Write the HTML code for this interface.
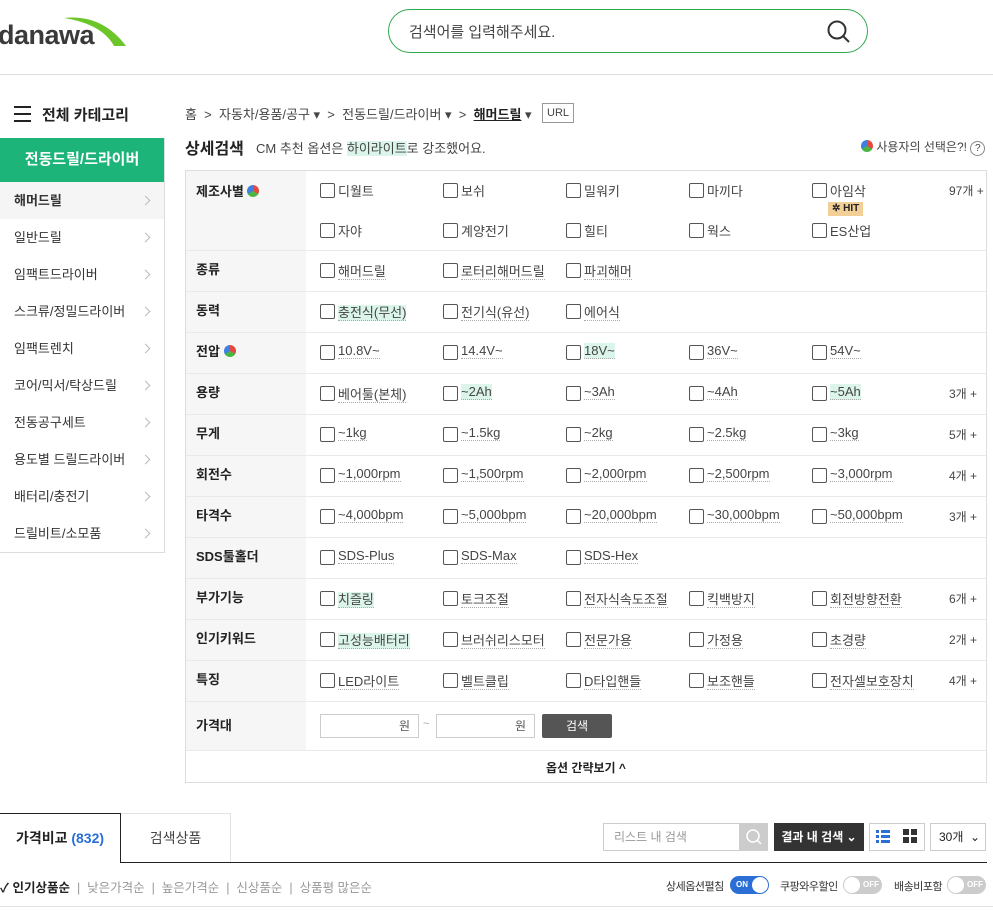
<!DOCTYPE html>
<html><head><meta charset="utf-8"><style>
*{box-sizing:border-box;margin:0;padding:0}
body{width:993px;height:911px;overflow:hidden;background:#fff;font-family:"Liberation Sans","Noto Sans CJK KR",sans-serif;color:#222;font-size:13px;position:relative}
.a{position:absolute;white-space:nowrap}
.hdr{position:absolute;left:0;top:74px;width:993px;height:1px;background:#ddd}
.search{position:absolute;left:388px;top:9px;width:480px;height:44px;border:1px solid #2fa84f;border-radius:22px}
.side{position:absolute;left:0;top:138px;width:165px;height:415px;border-right:1px solid #ddd;border-bottom:1px solid #ddd}
.side .g{height:44px;background:#1db47a;color:#fff;font-weight:bold;font-size:15px;text-align:center;line-height:44px}
.side .it{height:37px;line-height:37px;padding-left:14px;font-size:13px;color:#333;position:relative}
.side .it:after{content:"";position:absolute;right:15px;top:15px;width:6px;height:6px;border-top:1px solid #bbb;border-right:1px solid #bbb;transform:rotate(45deg)}
.tbl{position:absolute;left:185px;top:170px;width:802px;height:613px;border:1px solid #ddd}
.lab{position:absolute;left:0;width:120px;background:#f6f6f6;font-weight:bold;font-size:13px;padding-left:10px}
.rl{position:absolute;left:0;width:800px;height:1px;background:#eaeaea}
.o{position:absolute;font-size:13px;color:#444;padding-left:18px}
.o:before{content:"";position:absolute;left:0;top:2px;width:13px;height:13px;border:1px solid #555;border-radius:2px;background:#fff}
.o span{border-bottom:1px dotted #aaa}
.hl span{background:#dcf5ea}
.cnt{position:absolute;left:763px;font-size:12px;color:#444}
.pie{display:inline-block;width:12px;height:12px;border-radius:50%;background:conic-gradient(#e5483f 0 33%,#4bb543 0 66%,#3f7fe0 0);vertical-align:-1px}
</style></head><body>
<div class="a" style="left:-2px;top:20px;font-size:27px;font-weight:bold;color:#3a3a3a;letter-spacing:-0.5px">danawa</div>
<svg class="a" style="left:62px;top:14px" width="66" height="32"><path d="M2 4 Q40 0 64 32 L52 32 Q40 10 2 4Z" fill="#6cc62a"/></svg>
<div class="search"><span class="a" style="left:20px;top:11px;font-size:15px;color:#444">검색어를 입력해주세요.</span>
<svg class="a" style="left:437px;top:9px" width="26" height="26"><circle cx="11" cy="11" r="8.5" fill="none" stroke="#333" stroke-width="2"/><path d="M17 17 L23 23" stroke="#333" stroke-width="2"/></svg></div>
<div class="hdr"></div>
<svg class="a" style="left:14px;top:106px" width="18" height="16"><path d="M0 1H17M0 8H17M0 15H17" stroke="#222" stroke-width="2"/></svg>
<div class="a" style="left:42px;top:104px;font-size:15px;font-weight:bold">전체 카테고리</div>
<div class="side"><div class="g">전동드릴/드라이버</div>
<div class="it" style="background:#f5f5f5;font-weight:bold">해머드릴</div><div class="it">일반드릴</div><div class="it">임팩트드라이버</div><div class="it">스크류/정밀드라이버</div><div class="it">임팩트렌치</div><div class="it">코어/믹서/탁상드릴</div><div class="it">전동공구세트</div><div class="it">용도별 드릴드라이버</div><div class="it">배터리/충전기</div><div class="it">드릴비트/소모품</div></div>
<div class="a" style="left:185px;top:104px;font-size:13px;color:#444">홈 &nbsp;&gt;&nbsp; 자동차/용품/공구 ▾ &nbsp;&gt;&nbsp; 전동드릴/드라이버 ▾ &nbsp;&gt;&nbsp; <b style="color:#222;text-decoration:underline">해머드릴</b> ▾</div>
<div class="a" style="left:542px;top:103px;border:1px solid #999;font-size:11px;padding:3px 4px;color:#444">URL</div>
<div class="a" style="left:185px;top:135px;font-size:16px;font-weight:bold">상세검색</div>
<div class="a" style="left:256px;top:138px;font-size:13px;color:#444">CM 추천 옵션은 <span style="background:#dcf5ea">하이라이트</span>로 강조했어요.</div>
<div class="a" style="left:861px;top:138px;font-size:12px;color:#444"><span class="pie"></span> 사용자의 선택은?! <span style="display:inline-block;width:15px;height:15px;border:1px solid #888;border-radius:50%;text-align:center;font-size:10px;line-height:13px">?</span></div>
<div class="tbl">
<div class="lab" style="top:0;height:79px;padding-top:10px">제조사별 <span class="pie"></span></div>
<div class="rl" style="top:79px"></div>
<div class="o" style="left:134px;top:10px"><span style="border:0">디월트</span></div><div class="o" style="left:257px;top:10px">보쉬</div><div class="o" style="left:380px;top:10px">밀워키</div><div class="o" style="left:503px;top:10px">마끼다</div><div class="o" style="left:626px;top:10px">아임삭</div><div class="cnt" style="top:11px">97개 +</div>
<div class="a" style="left:642px;top:31px;background:#f1cf97;font-size:10px;font-weight:bold;padding:0 4px;line-height:14px">✲ HIT</div>
<div class="o" style="left:134px;top:50px">자야</div><div class="o" style="left:257px;top:50px">계양전기</div><div class="o" style="left:380px;top:50px">힐티</div><div class="o" style="left:503px;top:50px">웍스</div><div class="o" style="left:626px;top:50px">ES산업</div>
<div id="rows"></div>
</div>
<script>
var R=[["종류",["해머드릴","로터리해머드릴","파괴해머"],"",[]],
["동력",["충전식(무선)","전기식(유선)","에어식"],"",[0]],
["전압 <span class='pie'></span>",["10.8V~","14.4V~","18V~","36V~","54V~"],"",[2]],
["용량",["베어툴(본체)","~2Ah","~3Ah","~4Ah","~5Ah"],"3개 +",[1,4]],
["무게",["~1kg","~1.5kg","~2kg","~2.5kg","~3kg"],"5개 +",[]],
["회전수",["~1,000rpm","~1,500rpm","~2,000rpm","~2,500rpm","~3,000rpm"],"4개 +",[]],
["타격수",["~4,000bpm","~5,000bpm","~20,000bpm","~30,000bpm","~50,000bpm"],"3개 +",[]],
["SDS툴홀더",["SDS-Plus","SDS-Max","SDS-Hex"],"",[]],
["부가기능",["치즐링","토크조절","전자식속도조절","킥백방지","회전방향전환"],"6개 +",[0]],
["인기키워드",["고성능배터리","브러쉬리스모터","전문가용","가정용","초경량"],"2개 +",[0]],
["특징",["LED라이트","벨트클립","D타입핸들","보조핸들","전자셀보호장치"],"4개 +",[]]];
var h="";R.forEach(function(r,i){var t=80+i*41;
h+="<div class='lab' style='top:"+t+"px;height:40px;line-height:38px'>"+r[0]+"</div><div class='rl' style='top:"+(t+40)+"px'></div>";
r[1].forEach(function(o,j){h+="<div class='o"+(r[3].indexOf(j)>=0?" hl":"")+"' style='left:"+(134+j*123)+"px;top:"+(t+10)+"px'><span>"+o+"</span></div>"});
if(r[2])h+="<div class='cnt' style='top:"+(t+11)+"px'>"+r[2]+"</div>";});
var t=531;
h+="<div class='lab' style='top:"+t+"px;height:48px;line-height:48px'>가격대</div><div class='rl' style='top:"+(t+48)+"px'></div>";
h+="<div class='a' style='left:134px;top:"+(t+12)+"px;width:99px;height:24px;border:1px solid #ccc;text-align:right;padding-right:8px;line-height:22px;font-size:12px;color:#555'>원</div>";
h+="<div class='a' style='left:237px;top:"+(t+16)+"px;color:#aaa;font-size:11px'>~</div>";
h+="<div class='a' style='left:250px;top:"+(t+12)+"px;width:99px;height:24px;border:1px solid #ccc;text-align:right;padding-right:8px;line-height:22px;font-size:12px;color:#555'>원</div>";
h+="<div class='a' style='left:356px;top:"+(t+12)+"px;width:70px;height:24px;background:#555;color:#fff;text-align:center;line-height:24px;font-size:12px;border-radius:2px'>검색</div>";
h+="<div class='a' style='left:360px;top:"+(t+57)+"px;font-size:12px;font-weight:bold'>옵션 간략보기 ^</div>";
document.getElementById("rows").outerHTML=h;
</script>
<div class="a" style="left:0;top:813px;width:121px;height:50px;border:1px solid #222;border-bottom:0;border-left:0;background:#fff;z-index:2;text-align:center;line-height:48px;font-size:14px;font-weight:bold">가격비교 <span style="color:#2a6ed6">(832)</span></div>
<div class="a" style="left:121px;top:813px;width:110px;height:49px;border:1px solid #e3e3e3;border-left:0;border-bottom:0;text-align:center;line-height:48px;font-size:14px;color:#444">검색상품</div>
<div class="a" style="left:121px;top:862px;width:866px;height:1px;background:#222"></div>
<div class="a" style="left:603px;top:823px;width:137px;height:28px;border:1px solid #ccc;font-size:12px;color:#999;line-height:26px;padding-left:10px">리스트 내 검색</div>
<div class="a" style="left:739px;top:823px;width:29px;height:28px;background:#ccc"><svg width="29" height="28"><circle cx="14" cy="13" r="6" fill="none" stroke="#fff" stroke-width="1.5"/><path d="M18 17l4 4" stroke="#fff" stroke-width="1.5"/></svg></div>
<div class="a" style="left:774px;top:823px;width:90px;height:28px;background:#333;color:#fff;font-size:12px;font-weight:bold;line-height:28px;text-align:center">결과 내 검색 ⌄</div>
<div class="a" style="left:869px;top:823px;width:56px;height:28px;border:1px solid #ccc"></div>
<svg class="a" style="left:876px;top:829px" width="14" height="14"><path d="M0 1h3v3H0zM5 1h9v3H5zM0 6h3v3H0zM5 6h9v3H5zM0 11h3v3H0zM5 11h9v3H5z" fill="#2a6ed6"/></svg>
<svg class="a" style="left:903px;top:829px" width="15" height="15"><path d="M0 0h6v6H0zM8 0h6v6H8zM0 8h6v6H0zM8 8h6v6H8z" fill="#333"/></svg>
<div class="a" style="left:930px;top:823px;width:56px;height:28px;border:1px solid #ccc;font-size:12px;line-height:26px;padding-left:8px">30개 &nbsp;⌄</div>
<div class="a" style="left:0;top:877px;font-size:12.5px;color:#999"><b style="color:#222">✓ 인기상품순</b> &nbsp;| &nbsp;낮은가격순 &nbsp;| &nbsp;높은가격순 &nbsp;| &nbsp;신상품순 &nbsp;| &nbsp;상품평 많은순</div>
<div class="a" style="left:666px;top:878px;font-size:11px;color:#333;letter-spacing:-0.5px">상세옵션펼침</div>
<div class="a" style="left:730px;top:876px;width:39px;height:18px;border-radius:9px;background:#2a6ed6;color:#fff;font-size:8px;font-weight:bold;line-height:18px;padding-left:6px">ON<span style="position:absolute;right:1px;top:1px;width:16px;height:16px;border-radius:50%;background:#fff"></span></div>
<div class="a" style="left:780px;top:878px;font-size:11px;color:#333;letter-spacing:-0.5px">쿠팡와우할인</div>
<div class="a" style="left:843px;top:876px;width:39px;height:18px;border-radius:9px;background:#ccc;color:#fff;font-size:8px;font-weight:bold;line-height:18px;padding-left:20px">OFF<span style="position:absolute;left:1px;top:1px;width:16px;height:16px;border-radius:50%;background:#fff"></span></div>
<div class="a" style="left:894px;top:878px;font-size:11px;color:#333;letter-spacing:-0.5px">배송비포함</div>
<div class="a" style="left:947px;top:876px;width:39px;height:18px;border-radius:9px;background:#ccc;color:#fff;font-size:8px;font-weight:bold;line-height:18px;padding-left:20px">OFF<span style="position:absolute;left:1px;top:1px;width:16px;height:16px;border-radius:50%;background:#fff"></span></div>
<div class="a" style="left:0;top:906px;width:993px;height:1px;background:#e3e3e3"></div>
</body></html>
